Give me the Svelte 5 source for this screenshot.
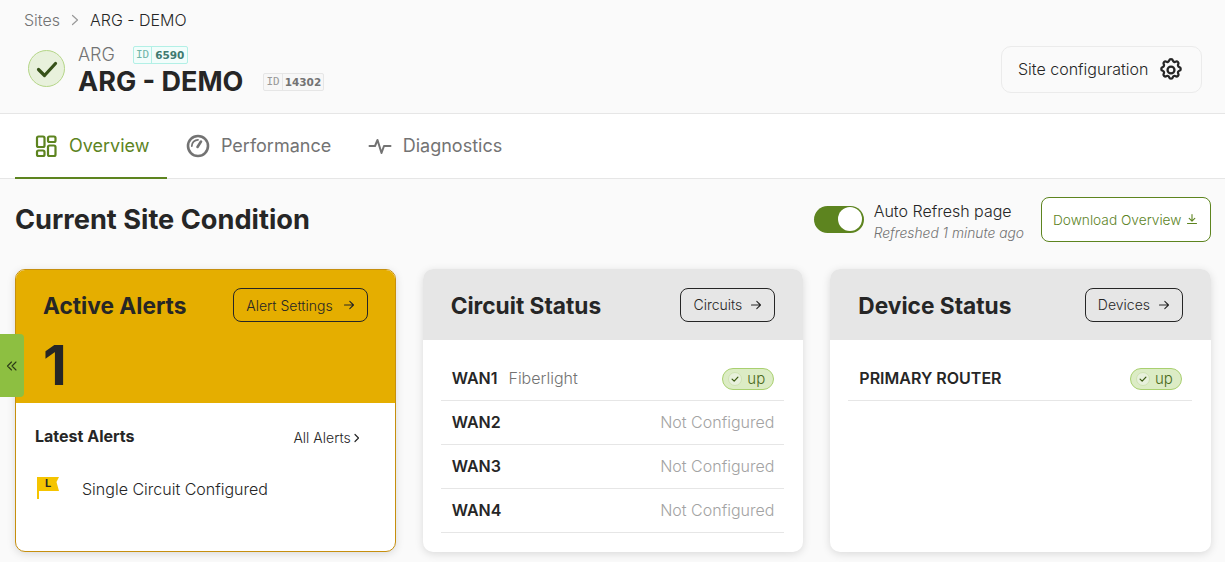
<script>
  const circuits = [
    { name: "WAN1", provider: "Fiberlight", up: true },
    { name: "WAN2" },
    { name: "WAN3" },
    { name: "WAN4" },
  ];
</script>

{#snippet arrow()}
  <svg class="arrow" viewBox="0 0 12 12" width="12" height="12" fill="none" stroke="currentColor" stroke-width="1.1" stroke-linecap="round" stroke-linejoin="round">
    <path d="M1.5 6h9M6.8 2.3 10.5 6 6.8 9.7" />
  </svg>
{/snippet}

{#snippet upBadge()}
  <span class="up">
    <span class="up-icon">
      <svg viewBox="0 0 12 12" width="10" height="10" fill="none" stroke="#3d5c14" stroke-width="1.5" stroke-linecap="round" stroke-linejoin="round">
        <path d="M2.5 6.2 5 8.6 9.5 3.8" />
      </svg>
    </span>
    up
  </span>
{/snippet}

<div class="page">
  <header class="site-header">
    <nav class="crumbs">
      <span class="crumb-parent">Sites</span>
      <svg viewBox="0 0 10 12" width="10" height="12" fill="none" stroke="#9a9a9a" stroke-width="1.2" stroke-linecap="round" stroke-linejoin="round">
        <path d="M2.5 1.5 7.5 6l-5 4.5" />
      </svg>
      <span class="crumb-current">ARG - DEMO</span>
    </nav>
    <div class="site-row">
      <div class="site-id">
        <span class="status-circle">
          <svg viewBox="0 0 24 24" width="24" height="24" fill="none" stroke="#37521a" stroke-width="3.2" stroke-linecap="round" stroke-linejoin="round">
            <path d="M3.5 12.5 9.5 18.5 20.5 6.5" />
          </svg>
        </span>
        <div class="names">
          <div class="name-top">
            <span class="parent-name">ARG</span>
            <span class="id-tag teal"><span class="id-label">ID</span><span class="id-num">6590</span></span>
          </div>
          <div class="name-main">
            <h1>ARG - DEMO</h1>
            <span class="id-tag grey"><span class="id-label">ID</span><span class="id-num">14302</span></span>
          </div>
        </div>
      </div>
      <button class="config-btn">
        <span class="config-label">Site configuration</span>
        <svg viewBox="0 0 24 24" width="26" height="26" fill="none" stroke="#262626" stroke-width="2.1" stroke-linecap="round" stroke-linejoin="round">
          <path d="M10.3 3.3c.4-1.7 3-1.7 3.4 0a1.7 1.7 0 0 0 2.6 1c1.5-.9 3.3.9 2.4 2.4a1.7 1.7 0 0 0 1 2.6c1.7.4 1.7 3 0 3.4a1.7 1.7 0 0 0-1 2.6c.9 1.5-.9 3.3-2.4 2.4a1.7 1.7 0 0 0-2.6 1c-.4 1.7-3 1.7-3.4 0a1.7 1.7 0 0 0-2.6-1c-1.5.9-3.3-.9-2.4-2.4a1.7 1.7 0 0 0-1-2.6c-1.7-.4-1.7-3 0-3.4a1.7 1.7 0 0 0 1-2.6c-.9-1.5.9-3.3 2.4-2.4a1.7 1.7 0 0 0 2.6-1Z" />
          <circle cx="12" cy="12" r="3.2" />
        </svg>
      </button>
    </div>
  </header>

  <div class="tabs">
    <div class="tab active">
      <svg viewBox="0 0 24 24" width="24" height="24" fill="none" stroke="currentColor" stroke-width="2.2" stroke-linejoin="round">
        <rect x="3" y="2.5" width="7.5" height="10.5" rx="1.5" />
        <rect x="14" y="2.5" width="7.5" height="5.5" rx="1.5" />
        <rect x="3" y="16.5" width="7.5" height="5.5" rx="1.5" />
        <rect x="14" y="11.5" width="7.5" height="10.5" rx="1.5" />
      </svg>
      Overview
    </div>
    <div class="tab">
      <svg viewBox="0 0 24 24" width="24" height="24" fill="none" stroke="currentColor" stroke-width="2.6" stroke-linecap="round">
        <circle cx="12" cy="12" r="10" />
        <path d="M5.8 12a6.2 6.2 0 0 1 6.2-6.2" stroke-width="1.8" />
        <path d="M15 7.5 11.5 13" />
      </svg>
      Performance
    </div>
    <div class="tab">
      <svg viewBox="0 0 24 24" width="24" height="24" fill="none" stroke="currentColor" stroke-width="2" stroke-linecap="round" stroke-linejoin="round">
        <path d="M1.5 12H7l2.5-6 4 13L16 12h6.5" />
      </svg>
      Diagnostics
    </div>
  </div>

  <main class="content">
    <div class="title-row">
      <h2>Current Site Condition</h2>
      <div class="title-actions">
        <span class="toggle"><span class="knob"></span></span>
        <div class="refresh">
          <div class="refresh-label">Auto Refresh page</div>
          <div class="refresh-time">Refreshed 1 minute ago</div>
        </div>
        <button class="download-btn">
          <span class="download-label">Download Overview</span>
          <svg viewBox="0 0 12 12" width="12" height="12" fill="none" stroke="currentColor" stroke-width="1.1" stroke-linecap="round" stroke-linejoin="round">
            <path d="M6 1.5v6.5M3.2 5.4 6 8.2l2.8-2.8M1.5 10.5h9" />
          </svg>
        </button>
      </div>
    </div>

    <div class="cards">
      <section class="card alerts">
        <div class="alerts-head">
          <div class="card-top">
            <h3>Active Alerts</h3>
            <button class="outline-btn">Alert Settings {@render arrow()}</button>
          </div>
          <div class="alert-count">1</div>
        </div>
        <div class="alerts-body">
          <div class="latest-row">
            <span class="latest-title">Latest Alerts</span>
            <span class="all-alerts">
              All Alerts
              <svg viewBox="0 0 8 10" width="8" height="10" fill="none" stroke="currentColor" stroke-width="1.2" stroke-linecap="round" stroke-linejoin="round">
                <path d="M2 1.5 5.5 5 2 8.5" />
              </svg>
            </span>
          </div>
          <div class="alert-row">
            <span class="flag">
              <svg viewBox="0 0 24 22" width="24" height="22">
                <path d="M1 0h22l-2.5 5L23 14H3v8H1Z" fill="#f5c400" />
              </svg>
              <span class="flag-letter">L</span>
            </span>
            Single Circuit Configured
          </div>
        </div>
      </section>

      <section class="card">
        <div class="card-head">
          <h3>Circuit Status</h3>
          <button class="outline-btn">Circuits {@render arrow()}</button>
        </div>
        <div class="card-body">
          {#each circuits as c}
            <div class="status-row">
              <span class="row-name">{c.name}</span>
              {#if c.provider}<span class="provider">{c.provider}</span>{/if}
              {#if c.up}
                {@render upBadge()}
              {:else}
                <span class="not-configured">Not Configured</span>
              {/if}
            </div>
          {/each}
        </div>
      </section>

      <section class="card">
        <div class="card-head">
          <h3>Device Status</h3>
          <button class="outline-btn">Devices {@render arrow()}</button>
        </div>
        <div class="card-body">
          <div class="status-row">
            <span class="row-name">PRIMARY ROUTER</span>
            {@render upBadge()}
          </div>
        </div>
      </section>
    </div>
  </main>

  <button class="collapse">
    <svg viewBox="0 0 12 12" width="12" height="12" fill="none" stroke="#2b3a18" stroke-width="1.1" stroke-linecap="round" stroke-linejoin="round">
      <path d="M5.5 2 1.5 6l4 4M10 2 6 6l4 4" />
    </svg>
  </button>
</div>

<style>
  :global(body) {
    margin: 0;
    background: #fafafa;
    overflow: hidden;
  }

  .page {
    position: relative;
    width: 1225px;
    height: 562px;
    overflow: hidden;
    background: #fafafa;
    color: #262626;
    font-family: Inter, "Liberation Sans", sans-serif;
    font-weight: 300;
  }

  button {
    font-family: inherit;
    font-weight: 300;
    cursor: pointer;
  }

  svg {
    flex-shrink: 0;
  }

  h1,
  h2,
  h3 {
    margin: 0;
  }

  .site-header {
    height: 113px;
    box-sizing: content-box;
    border-bottom: 1px solid #e6e6e6;
  }

  .crumbs {
    display: flex;
    align-items: center;
    gap: 10px;
    padding: 11px 0 0 24px;
    height: 18px;
    font-size: 16px;
    line-height: 18px;
  }

  .crumb-parent {
    color: #737373;
  }

  .crumb-current {
    color: #262626;
  }

  .site-row {
    display: flex;
    justify-content: space-between;
    padding: 16px 23px 0 28px;
  }

  .site-id {
    display: flex;
    align-items: flex-start;
    gap: 14px;
  }

  .status-circle {
    display: flex;
    align-items: center;
    justify-content: center;
    box-sizing: border-box;
    width: 37px;
    height: 37px;
    margin-top: 5px;
    border-radius: 50%;
    background: #e8f1dc;
    border: 1px solid #b5d688;
  }

  .names {
    margin-left: -1px;
  }

  .name-top {
    display: flex;
    align-items: center;
    gap: 18px;
    height: 18px;
    padding-top: 1px;
  }

  .parent-name {
    font-size: 18px;
    line-height: 18px;
    color: #737373;
  }

  .name-main {
    display: flex;
    align-items: center;
    gap: 20px;
    margin-top: 1px;
  }

  h1 {
    font-size: 27px;
    line-height: 33px;
    font-weight: 700;
  }

  .id-tag {
    display: inline-flex;
    align-items: center;
    height: 18px;
    box-sizing: border-box;
    border: 1px solid;
    border-radius: 2px;
    font-size: 11px;
    line-height: 16px;
  }

  .id-label {
    font-family: "DejaVu Sans Mono", monospace;
    font-weight: 400;
    padding: 0 2px;
    border-right: 1px solid;
    border-color: inherit;
    height: 16px;
  }

  .id-num {
    font-family: "DejaVu Sans", sans-serif;
    font-weight: 700;
    font-size: 10.5px;
    padding: 0 2px;
  }

  .id-tag.teal {
    background: #f2fdfb;
    border-color: #b2f0e6;
  }

  .teal .id-num {
    color: #3f7a70;
    padding: 0 3px;
  }

  .teal .id-label {
    color: #6fb5a8;
  }

  .id-tag.grey {
    background: #f7f7f7;
    border-color: #e6e6e6;
  }

  .grey .id-label {
    color: #9a9a9a;
  }

  .grey .id-num {
    color: #737373;
  }

  .config-btn {
    display: flex;
    align-items: center;
    gap: 10px;
    box-sizing: border-box;
    width: 201px;
    height: 47px;
    margin-top: 1px;
    padding: 0 16px;
    background: #fafafa;
    border: 1px solid #ebebeb;
    border-radius: 10px;
    font-size: 16px;
    color: #262626;
    white-space: nowrap;
  }

  .config-label {
    padding-bottom: 2px;
  }

  .tabs {
    display: flex;
    height: 64px;
    padding-left: 15px;
    background: #fff;
    border-bottom: 1px solid #e6e6e6;
  }

  .tab {
    display: flex;
    align-items: center;
    gap: 11px;
    padding: 0 18px 0 18.5px;
    font-size: 18px;
    font-weight: 400;
    color: #737373;
    margin-bottom: -1px;
    border-bottom: 2px solid transparent;
    box-sizing: border-box;
    height: 65px;
  }

  .tab.active {
    padding-left: 19px;
    color: #5d841f;
    border-bottom-color: #5d841f;
  }

  .content {
    padding: 17px 14px 0 15px;
  }

  .title-row {
    display: flex;
    justify-content: space-between;
    align-items: center;
    height: 46px;
  }

  h2 {
    font-size: 27.2px;
    font-weight: 700;
    line-height: 46px;
    padding-top: 1px;
  }

  .title-actions {
    display: flex;
    align-items: center;
  }

  .toggle {
    display: flex;
    align-items: center;
    justify-content: flex-end;
    width: 50px;
    height: 27px;
    box-sizing: border-box;
    padding-right: 2px;
    border-radius: 14px;
    background: #5d841f;
    margin-right: 10px;
  }

  .knob {
    width: 24px;
    height: 24px;
    border-radius: 50%;
    background: #fff;
  }

  .refresh {
    margin-right: 17px;
    padding-top: 8px;
  }

  .refresh-label {
    font-size: 16px;
    line-height: 20px;
  }

  .refresh-time {
    font-size: 13.8px;
    line-height: 23px;
    margin-top: 1px;
    font-style: italic;
    color: #737373;
  }

  .download-btn {
    display: flex;
    align-items: center;
    gap: 5px;
    box-sizing: border-box;
    height: 45px;
    width: 170px;
    padding: 0 11px;
    background: #fff;
    border: 1px solid #5d841f;
    border-radius: 8px;
    font-size: 13.7px;
    color: #5d841f;
    white-space: nowrap;
  }

  .download-label {
    padding-top: 2px;
  }

  .cards {
    display: grid;
    grid-template-columns: repeat(3, 1fr);
    gap: 27px;
    margin-top: 27px;
  }

  .card {
    height: 283px;
    box-sizing: border-box;
    border-radius: 10px;
    background: #fff;
    overflow: hidden;
    box-shadow: 0 2px 8px rgba(0, 0, 0, 0.13);
  }

  h3 {
    font-size: 22.7px;
    font-weight: 700;
    line-height: 28px;
    margin-top: 2px;
  }

  .card-head {
    display: flex;
    justify-content: space-between;
    align-items: center;
    height: 71px;
    padding: 0 28px;
    background: #e6e6e6;
  }

  .outline-btn {
    display: flex;
    align-items: center;
    gap: 8px;
    height: 34px;
    padding: 0 12px;
    background: transparent;
    border: 1px solid #262626;
    border-radius: 8px;
    font-size: 14px;
    color: #262626;
    white-space: nowrap;
  }

  .card-body {
    padding: 17px 19px 0 18px;
  }

  .status-row {
    display: flex;
    align-items: center;
    box-sizing: border-box;
    height: 44px;
    padding: 0 10px 2px 11px;
    border-bottom: 1px solid #e6e6e6;
    font-size: 16px;
  }

  .row-name {
    font-weight: 600;
  }

  .provider {
    margin-left: 11px;
    color: #737373;
  }

  .not-configured {
    margin-left: auto;
    color: #a3a3a3;
  }

  .up {
    display: flex;
    align-items: center;
    gap: 5px;
    box-sizing: border-box;
    margin-left: auto;
    margin-top: 2px;
    width: 52px;
    height: 22px;
    padding-left: 5px;
    border-radius: 11px;
    background: #dcecc5;
    border: 1px solid #a9d070;
    font-size: 15px;
    color: #4a6a1a;
  }

  .up-icon {
    display: flex;
    align-items: center;
    justify-content: center;
    width: 14px;
    height: 14px;
    border-radius: 50%;
    background: #e8f1dc;
    border: 1px solid #cfe2b2;
    box-sizing: border-box;
  }

  .card.alerts {
    border: 1px solid #c68f0e;
  }

  .alerts-head {
    height: 133px;
    padding: 0 27px 0 27px;
    background: #e5ae00;
  }

  .alerts-head .outline-btn {
    gap: 10px;
  }

  .card-top {
    display: flex;
    justify-content: space-between;
    align-items: center;
    height: 70px;
  }

  .alert-count {
    font-size: 55px;
    font-weight: 700;
    line-height: 48px;
    margin-top: 1px;
  }

  .alerts-body {
    padding: 23px 34px 0 19px;
  }

  .latest-row {
    display: flex;
    justify-content: space-between;
    align-items: center;
  }

  .latest-title {
    font-size: 16px;
    font-weight: 700;
    line-height: 20px;
  }

  .all-alerts {
    display: flex;
    align-items: center;
    gap: 2px;
    font-size: 14px;
    padding-top: 3px;
  }

  .alert-row {
    display: flex;
    align-items: center;
    gap: 22px;
    margin-top: 33px;
    font-size: 16px;
  }

  .flag {
    position: relative;
    display: flex;
    width: 24px;
    height: 22px;
    margin: -3px 0 0 1px;
  }

  .flag-letter {
    position: absolute;
    top: 0;
    left: 9px;
    font-size: 11px;
    font-weight: 700;
    line-height: 13px;
  }

  .collapse {
    position: absolute;
    left: 0;
    top: 334px;
    display: flex;
    align-items: center;
    justify-content: center;
    width: 24px;
    height: 63px;
    padding: 0;
    border: none;
    border-radius: 0 4px 4px 0;
    background: #8dbf41;
  }
</style>
